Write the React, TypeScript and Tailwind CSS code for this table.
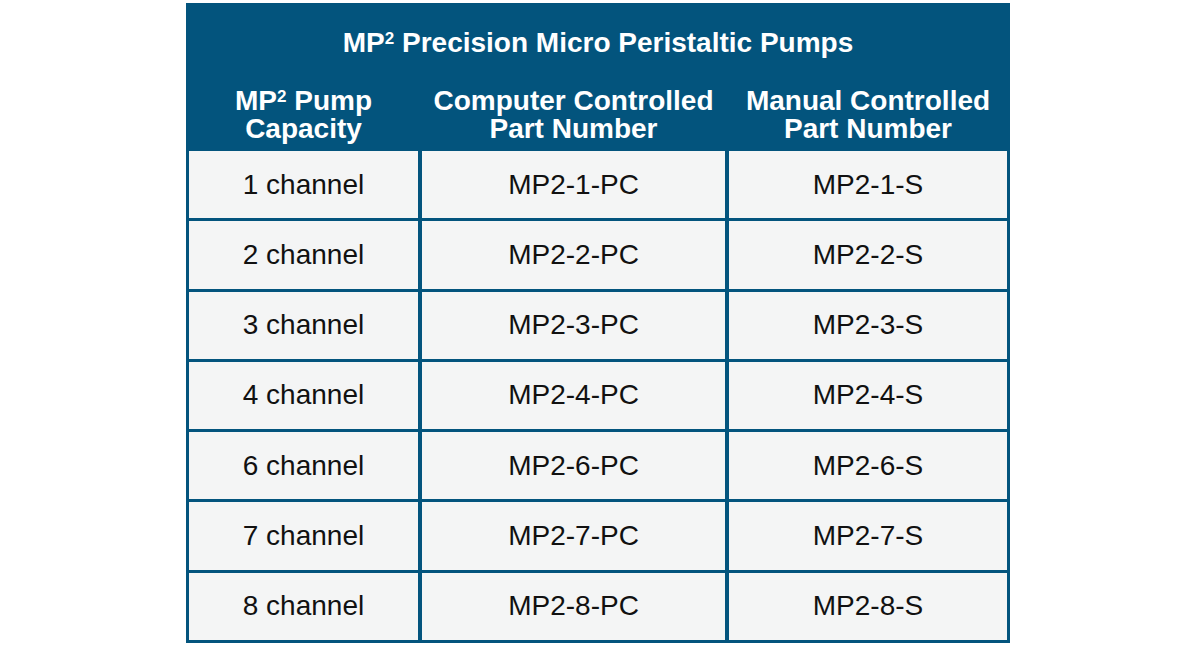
import React from "react";

const rows = [1, 2, 3, 4, 6, 7, 8];

function Sup() {
  return <span className="text-[17px] align-top leading-[20px]">2</span>;
}

export default function App() {
  return (
    <div
      className="w-[1200px] h-[656px] bg-white flex pl-[186px]"
      style={{ fontFamily: '"Liberation Sans", Arial, sans-serif' }}
    >
      <div className="mt-[3px] w-[824px] h-[640px] bg-[#03547d] p-[3px] flex flex-col">
        <div className="flex flex-col h-[145px] text-white font-bold text-[28px] leading-[28px]">
          <div className="text-center pt-[23px]">
            MP<Sup /> Precision Micro Peristaltic Pumps
          </div>
          <div className="grid grid-cols-[229px_303px_278px] gap-x-[4px] mt-[30px] text-center">
            <div>
              MP<Sup /> Pump
              <br />
              Capacity
            </div>
            <div>
              Computer Controlled
              <br />
              Part Number
            </div>
            <div>
              Manual Controlled
              <br />
              Part Number
            </div>
          </div>
        </div>
        <div className="grid grid-cols-[229px_303px_278px] gap-x-[4px] gap-y-[3px] flex-1 grid-rows-7 text-[28px] text-[#111]">
          {rows.map((n) => (
            <React.Fragment key={n}>
              <div className="bg-[#f4f5f5] flex items-center justify-center">{n} channel</div>
              <div className="bg-[#f4f5f5] flex items-center justify-center">MP2-{n}-PC</div>
              <div className="bg-[#f4f5f5] flex items-center justify-center">MP2-{n}-S</div>
            </React.Fragment>
          ))}
        </div>
      </div>
    </div>
  );
}
